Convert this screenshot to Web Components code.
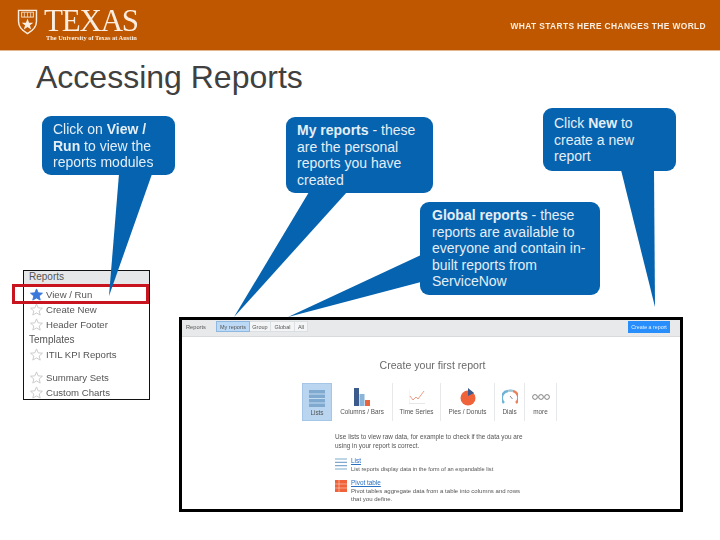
<!DOCTYPE html>
<html>
<head>
<meta charset="utf-8">
<title>Accessing Reports</title>
<style>
    html, body { margin: 0; background: #fff; }
    #slide { position: relative; width: 720px; height: 540px; overflow: hidden; font-family: "Liberation Sans", Arial, sans-serif; }
    call-out b { font-weight: bold; }
</style>
</head>
<body>
<div id="slide">
    <ut-header></ut-header>
    <slide-title>Accessing Reports</slide-title>

    <report-menu style="left:23px;top:270px"></report-menu>
    <red-box style="left:12px;top:284px;width:137px;height:20px"></red-box>
    <report-screen style="left:179px;top:317px"></report-screen>

    <call-out style="left:42px;top:116px;width:133px;height:59px" tail="77,58 110,58 67,180">Click on <b>View /</b><br><b>Run</b> to view the<br>reports modules</call-out>
    <call-out style="left:286px;top:117px;width:147px;height:76px" tail="23,75 61,75 -52,200">
        <b>My reports</b> - these<br>are the personal<br>reports you have<br>created</call-out>
    <call-out style="left:420px;top:202px;width:180px;height:93px;padding-left:12px" tail="1,53 1,80 -132,115">
        <b>Global reports</b> - these<br>reports are available to<br>everyone and contain in-<br>built reports from<br>ServiceNow</call-out>
    <call-out style="left:543px;top:108px;width:133px;height:63px;padding-top:7px" tail="78,62 111,62 112,199">
        Click <b>New</b> to<br>create a new<br>report</call-out>
</div>

<template id="ut-header-tpl">
    <style>
        :host { display: flex; justify-content: space-between; align-items: flex-start; box-sizing: border-box; height: 51px; padding: 7px 14px 0 17px; background: #bf5700; border-bottom: 1px solid #e3b78f; color: #fbeee0; }
        .brand { display: flex; gap: 6px; filter: blur(.35px); }
        .wordmark { display: flex; flex-direction: column; }
        .texas { font: 31px/26px "Liberation Serif", serif; letter-spacing: -1.2px; padding-top: 1px; }
        .sub { font: bold 6.4px/8px "Liberation Serif", serif; margin: 0 0 0 2px; white-space: nowrap; }
        .tag { font: bold 8.4px/10px "Liberation Sans", sans-serif; letter-spacing: .38px; margin-top: 14px; white-space: nowrap; filter: blur(.25px); }
    </style>
    <div class="brand">
        <svg width="21" height="26" viewBox="0 0 23 29" style="margin-top:2px">
            <path d="M1.5 1.5H21.5V14C21.5 21 16 25 11.5 27.5C7 25 1.5 21 1.5 14Z" fill="none" stroke="#fbeee0" stroke-width="1.6"/>
            <rect x="5" y="3.5" width="13" height="5.5" fill="none" stroke="#fbeee0"/>
            <path d="M8 4V9M11.5 4V9M15 4V9" stroke="#fbeee0" stroke-width=".8"/>
            <path d="M11.5 10.5L13.2 15.2H18L14.2 18.2L15.6 23L11.5 20L7.4 23L8.8 18.2L5 15.2H9.8Z" fill="#fbeee0"/>
        </svg>
        <div class="wordmark">
            <span class="texas">TEXAS</span>
            <span class="sub">The University of Texas at Austin</span>
        </div>
    </div>
    <div class="tag">WHAT STARTS HERE CHANGES THE WORLD</div>
</template>

<template id="slide-title-tpl">
    <style>
        :host { display: block; padding: 8px 0 0 36px; font: 32px/36px "Liberation Sans", sans-serif; color: #404040; }
    </style>
    <slot></slot>
</template>

<template id="call-out-tpl">
    <style>
        :host { position: absolute; box-sizing: border-box; padding: 5px 0 0 11px; background: #0563af; border-radius: 9px; color: #e4eef6; font: 14px/16.6px "Liberation Sans", sans-serif; white-space: nowrap; }
        svg { position: absolute; left: 0; top: 0; overflow: visible; }
        polygon { fill: #0563af; }
        div { position: relative; }
    </style>
    <svg width="1" height="1"><polygon></polygon></svg>
    <div><slot></slot></div>
</template>

<template id="red-box-tpl">
    <style>
        :host { position: absolute; box-sizing: border-box; border: 3px solid #c8141e; }
    </style>
</template>

<template id="menu-row-tpl">
    <style>
        :host { display: flex; align-items: center; gap: 3px; height: 15px; padding-left: 6px; white-space: nowrap; }
        svg { width: 13px; height: 13px; flex: none; }
        polygon { fill: none; stroke: #c8c8c8; stroke-width: 1; }
        :host([active]) polygon { fill: #3a78dc; stroke: #3a78dc; }
    </style>
    <svg viewBox="0 0 14 14"><polygon points="7,1 8.8,5.2 13.4,5.6 9.9,8.6 11,13 7,10.7 3,13 4.1,8.6 .6,5.6 5.2,5.2"></polygon></svg>
    <slot></slot>
</template>

<template id="report-menu-tpl">
    <style>
        :host { position: absolute; box-sizing: border-box; width: 127px; height: 130px; border: 1px solid #111; background: #fff; font: 9.6px/13px "Liberation Sans", sans-serif; color: #555; overflow: hidden; }
        .inner { filter: blur(.35px); }
        .head { background: #e6e7e8; height: 13px; padding-left: 5px; font-size: 10px; line-height: 12px; margin-bottom: 3px; }
        .sec { padding-left: 5px; height: 15px; line-height: 15px; font-size: 10px; }
        .gap { height: 8px; }
    </style>
    <div class="inner">
        <div class="head">Reports</div>
        <menu-row active>View / Run</menu-row>
        <menu-row>Create New</menu-row>
        <menu-row>Header Footer</menu-row>
        <div class="sec">Templates</div>
        <menu-row>ITIL KPI Reports</menu-row>
        <div class="gap"></div>
        <menu-row>Summary Sets</menu-row>
        <menu-row>Custom Charts</menu-row>
    </div>
</template>

<template id="chart-tile-tpl">
    <style>
        :host { display: flex; flex-direction: column; align-items: center; box-sizing: border-box; height: 38px; padding-top: 5px; border-right: 1px solid #e6e8ea; font: 6.4px/8px "Liberation Sans", sans-serif; color: #555; white-space: nowrap; }
        :host([selected]) { background: #b9d5f0; border: 1px solid #a5c6e6; }
        .ic { height: 18px; display: flex; align-items: center; margin-bottom: 2px; }
    </style>
    <div class="ic"><slot name="icon"></slot></div>
    <slot></slot>
</template>

<template id="report-screen-tpl">
    <style>
        :host { position: absolute; box-sizing: border-box; width: 504px; height: 195px; border: 3px solid #000; background: #fff; font-family: "Liberation Sans", sans-serif; color: #555; overflow: hidden; }
        .inner { filter: blur(.3px); }
        .bar { display: flex; align-items: flex-start; height: 17px; background: #e7e9ea; border-bottom: 1px solid #d8dadc; padding: 1px 10px 0 4px; font-size: 5.5px; box-sizing: border-box; }
        .bar .name { width: 30px; line-height: 12px; font-size: 5.7px; }
        .tabs { display: flex; }
        .tabs span { box-sizing: border-box; height: 11px; line-height: 10px; text-align: center; background: #f4f5f6; border: 1px solid #dcdfe1; border-left: 0; }
        .tabs span.on { background: #bcd9f5; border: 1px solid #8fb8e0; }
        .btn { margin-left: auto; height: 12px; line-height: 12px; width: 42px; text-align: center; background: #278efc; color: #eaf4ff; font-size: 5.3px; }
        h2 { margin: 21px 0 0; text-align: center; font: 10.6px/14px "Liberation Sans", sans-serif; color: #6a6a6a; padding-left: 3px; }
        .tiles { display: flex; margin: 11px 0 0 120px; }
        .body { margin: 11px 0 0 153px; width: 196px; font: 6.4px/9px "Liberation Sans", sans-serif; }
        .item { display: flex; gap: 4px; margin-top: 7px; line-height: 8px; }
        .item svg { flex: none; margin-top: 1px; }
        a { color: #2a6fc0; text-decoration: underline; display: block; line-height: 8px; font-size: 6.4px; }
    </style>
    <div class="inner">
        <div class="bar">
            <span class="name">Reports</span>
            <div class="tabs"><span class="on" style="width:34px">My reports</span><span style="width:21px">Group</span><span style="width:24px">Global</span><span style="width:13px">All</span></div>
            <span class="btn">Create a report</span>
        </div>
        <h2>Create your first report</h2>
        <div class="tiles">
            <chart-tile selected style="width:30px">
                <svg slot="icon" width="16" height="17" viewBox="0 0 16 17"><path d="M0 0H16V17H0Z" fill="#7fa9cf"/><path d="M0 4H16M0 8.5H16M0 13H16" stroke="#c4dcf2"/></svg>
                Lists</chart-tile>
            <chart-tile style="width:61px">
                <svg slot="icon" width="16" height="18" viewBox="0 0 16 18"><rect width="5" height="18" fill="#3c5a8c"/><rect x="5.5" y="6" width="5" height="12" fill="#8ab5d9"/><rect x="11" y="12" width="5" height="6" fill="#e8643c"/></svg>
                Columns / Bars</chart-tile>
            <chart-tile style="width:48px">
                <svg slot="icon" width="16" height="14" viewBox="0 0 16 14"><path d="M0 .5V13.5H16" fill="none" stroke="#ddd" stroke-width=".7"/><path d="M1 6L4 10L7 7L9 9L15 1" fill="none" stroke="#ea8468" stroke-width=".8"/></svg>
                Time Series</chart-tile>
            <chart-tile style="width:54px">
                <svg slot="icon" width="16" height="18" viewBox="0 0 16 18"><circle cx="8" cy="10" r="7.5" fill="#f0623a"/><path d="M8 0L14 5L8 8Z" fill="#3c5a8c"/></svg>
                Pies / Donuts</chart-tile>
            <chart-tile style="width:30px">
                <svg slot="icon" width="16" height="16" viewBox="0 0 16 16"><path d="M2 14A7 7 0 0 1 6 2" fill="none" stroke="#6fb3d6" stroke-width="2.4"/><path d="M6 2A7 7 0 0 1 11 2" fill="none" stroke="#9fc7d6" stroke-width="2.4"/><path d="M11 2A7 7 0 0 1 14 14" fill="none" stroke="#e8805a" stroke-width="2.4"/><path d="M8 7L10.5 10" stroke="#555" stroke-width=".7"/></svg>
                Dials</chart-tile>
            <chart-tile style="width:32px">
                <svg slot="icon" width="18" height="6" viewBox="0 0 18 6"><g fill="none" stroke="#666" stroke-width=".8"><circle cx="3" cy="3" r="2.4"/><circle cx="9" cy="3" r="2.4"/><circle cx="15" cy="3" r="2.4"/></g></svg>
                more</chart-tile>
        </div>
        <div class="body">
            <div>Use lists to view raw data, for example to check if the data you are using in your report is correct.</div>
            <div class="item" style="font-size:5.7px">
                <svg width="12" height="12" viewBox="0 0 12 12"><path d="M0 1H12M0 4.3H12M0 7.6H12M0 11H12" stroke="#7fa9cf" stroke-width="1.2"/></svg>
                <div><a>List</a>List reports display data in the form of an expandable list</div>
            </div>
            <div class="item" style="margin-top:6px;font-size:6.05px">
                <svg width="12" height="12" viewBox="0 0 12 12"><rect width="12" height="12" fill="#f0623a"/><path d="M0 4H12M0 8H12M4 0V12" stroke="#fbd3c6" stroke-width=".6"/></svg>
                <div><a>Pivot table</a>Pivot tables aggregate data from a table into columns and rows that you define.</div>
            </div>
        </div>
    </div>
</template>

<script>
    function shadow(el, id) {
        el.attachShadow({ mode: 'open' }).appendChild(document.getElementById(id).content.cloneNode(true));
    }

    class UtHeader extends HTMLElement {
        constructor() { super(); shadow(this, 'ut-header-tpl'); }
    }
    class SlideTitle extends HTMLElement {
        constructor() { super(); shadow(this, 'slide-title-tpl'); }
    }
    class CallOut extends HTMLElement {
        constructor() { super(); shadow(this, 'call-out-tpl'); }
        connectedCallback() {
            this.shadowRoot.querySelector('polygon').setAttribute('points', this.getAttribute('tail'));
        }
    }
    class RedBox extends HTMLElement {
        constructor() { super(); shadow(this, 'red-box-tpl'); }
    }
    class MenuRow extends HTMLElement {
        constructor() { super(); shadow(this, 'menu-row-tpl'); }
    }
    class ReportMenu extends HTMLElement {
        constructor() { super(); shadow(this, 'report-menu-tpl'); }
    }
    class ChartTile extends HTMLElement {
        constructor() { super(); shadow(this, 'chart-tile-tpl'); }
    }
    class ReportScreen extends HTMLElement {
        constructor() { super(); shadow(this, 'report-screen-tpl'); }
    }

    customElements.define('ut-header', UtHeader);
    customElements.define('slide-title', SlideTitle);
    customElements.define('call-out', CallOut);
    customElements.define('red-box', RedBox);
    customElements.define('menu-row', MenuRow);
    customElements.define('report-menu', ReportMenu);
    customElements.define('chart-tile', ChartTile);
    customElements.define('report-screen', ReportScreen);
</script>
</body>
</html>
